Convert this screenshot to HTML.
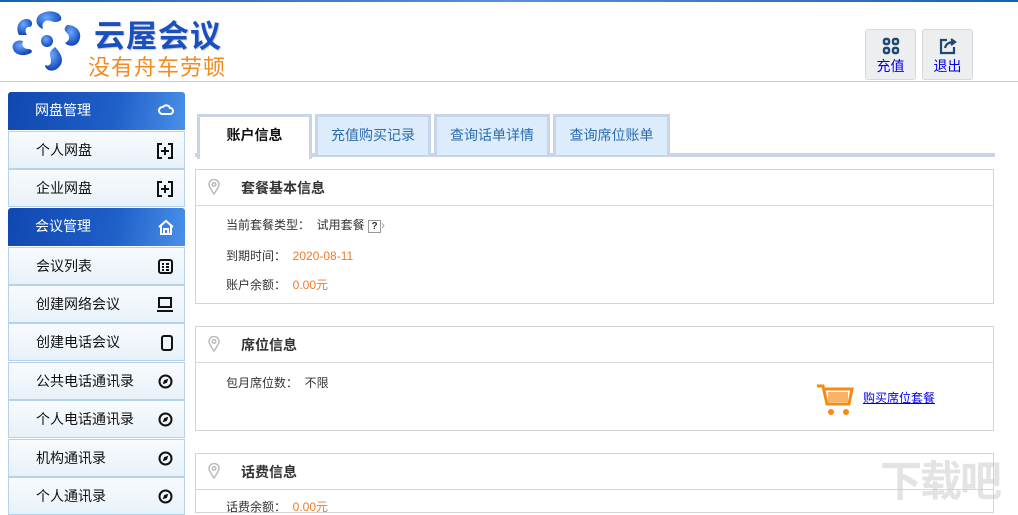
<!DOCTYPE html>
<html><head><meta charset="utf-8"><style>
*{margin:0;padding:0;box-sizing:border-box}
body{width:1018px;height:503px;overflow:hidden;background:#fff;font-family:"Liberation Sans","Noto Sans CJK SC",sans-serif;font-size:13px;color:#222;position:relative}
.abs{position:absolute}
.topline{left:0;top:0;width:1018px;height:2px;background:linear-gradient(90deg,#1a5fb0,#5b8fd0,#1a5fb0)}
.hdline{left:0;top:81px;width:1018px;height:1px;background:#ccc}
.btn{top:29px;width:51px;height:51px;background:#eceef0;border:1px solid #d6d8da;border-radius:3px;text-align:center;color:#0000ee;font-size:14px}
.btn svg{display:block;margin:7px auto 1px}
.side{left:8px;width:177px;height:38px;border:1px solid #b6d2ea;background:linear-gradient(#f8fbfe,#e8f1f9);font-size:14px;color:#111;padding-left:27px;line-height:36px}
.side.h{background:linear-gradient(100deg,#1048b0,#1f5fc8 60%,#4a90e8);color:#fff;border:none;border-radius:3px 3px 0 0}
.side svg{position:absolute;right:11px;top:11px}
.tab{top:114px;height:41px;background:#dcecfa;border:3px solid #c8d4ea;border-bottom:none;color:#2b6cb0;font-size:14px;text-align:center;line-height:37px}
.tab.a{background:#fff;color:#111;font-weight:bold;height:45px}
.panel{left:195px;width:799px;border:1px solid #d4d4d4;background:#fff}
.ph{height:36px;border-bottom:1px solid #d8d8d8;font-weight:bold;font-size:14px;line-height:36px;padding-left:45px;color:#333;position:relative}
.ph svg{position:absolute;left:12px;top:9px}
.row{font-size:12px;color:#333;padding-left:30px;position:absolute}
.or{color:#f07a28}
</style></head><body>
<div class="abs topline"></div>
<svg class="abs" style="left:9px;top:9px" width="76" height="66" viewBox="0 0 76 66">
<defs><radialGradient id="g" cx=".4" cy=".35" r=".7"><stop offset="0" stop-color="#6aa8ff"/><stop offset="1" stop-color="#0a3fb0"/></radialGradient></defs>
<path d="M30 6c8-6 20-4 22 2 2 5-6 6-10 4-6-2-10 2-8 8-6-2-9-9-4-14z" fill="url(#g)"/>
<path d="M58 16c10 0 16 8 12 16-3 6-10 6-14 2 4-2 6-6 2-10-2-2-4-4 0-8z" fill="url(#g)"/>
<path d="M46 38c6 6 10 14 4 20-5 6-14 4-14-2 2 1 6 1 6-4 0-6-4-8 4-14z" fill="url(#g)"/>
<path d="M22 44c-8 4-16 2-18-4-2-6 4-10 10-8-2 4 0 8 6 8 2 0 4 2 2 4z" fill="url(#g)"/>
<path d="M10 26c-4-8 0-16 8-16 5 0 7 6 3 8-4-1-6 4-3 8z" fill="url(#g)"/>
<circle cx="38" cy="32" r="6" fill="url(#g)"/>
</svg>
<div class="abs" style="left:94px;top:11px;font-size:31px;font-weight:bold;color:#1a4fc0;letter-spacing:1px;text-shadow:1px 1px 1px #ccc">云屋会议</div>
<div class="abs" style="left:88px;top:50px;font-size:22px;color:#f58a1e;letter-spacing:1px">没有舟车劳顿</div>
<div class="abs btn" style="left:865px"><svg width="18" height="18" viewBox="0 0 18 18" fill="none" stroke="#1f4a70" stroke-width="2.4"><rect x="2" y="2" width="5" height="5" rx="1.5"/><rect x="11" y="2" width="5" height="5" rx="1.5"/><rect x="2" y="11" width="5" height="5" rx="1.5"/><rect x="11" y="11" width="5" height="5" rx="1.5"/></svg>充值</div>
<div class="abs btn" style="left:922px"><svg width="18" height="18" viewBox="0 0 18 18" fill="none" stroke="#1f4a70" stroke-width="2.2"><path d="M8 3H2v13h13v-6"/><path d="M6 11c1-4 4-6 9-6" /><path d="M12 2l4 3-4 3" fill="#1f4a70"/></svg>退出</div>
<div class="abs hdline"></div>

<div class="abs side h" style="top:92px">网盘管理<svg width="16" height="12" viewBox="0 0 16 12" fill="none" stroke="#fff" stroke-width="2"><path d="M4 11h8a3 3 0 0 0 0-6 4 4 0 0 0-7-1 3.5 3.5 0 0 0-1 7z"/></svg></div>
<div class="abs side" style="top:131px">个人网盘<svg width="16" height="16" viewBox="0 0 16 16" fill="none" stroke="#111" stroke-width="2"><path d="M5 1H1v14h4M11 1h4v14h-4M8 4v8M4 8h8"/></svg></div>
<div class="abs side" style="top:169px">企业网盘<svg width="16" height="16" viewBox="0 0 16 16" fill="none" stroke="#111" stroke-width="2"><path d="M5 1H1v14h4M11 1h4v14h-4M8 4v8M4 8h8"/></svg></div>
<div class="abs side h" style="top:208px">会议管理<svg width="16" height="16" viewBox="0 0 16 16" fill="none" stroke="#fff" stroke-width="2"><path d="M1 8l7-6 7 6M3 7v8h10V7M6 15v-5h4v5"/></svg></div>
<div class="abs side" style="top:247px">会议列表<svg width="15" height="15" viewBox="0 0 15 15" fill="none" stroke="#111" stroke-width="2"><rect x="1" y="1" width="13" height="13" rx="2"/><path d="M4 5h2M8 5h3M4 8h2M8 8h3M4 11h2M8 11h3"/></svg></div>
<div class="abs side" style="top:285px">创建网络会议<svg width="16" height="15" viewBox="0 0 16 15" fill="none" stroke="#111" stroke-width="2"><rect x="2" y="1" width="12" height="9"/><path d="M0 14h16"/></svg></div>
<div class="abs side" style="top:323px">创建电话会议<svg width="12" height="16" viewBox="0 0 12 16" fill="none" stroke="#111" stroke-width="2"><rect x="1" y="1" width="10" height="14" rx="2"/></svg></div>
<div class="abs side" style="top:362px">公共电话通讯录<svg width="15" height="15" viewBox="0 0 15 15" fill="none" stroke="#111" stroke-width="2"><circle cx="7.5" cy="7.5" r="6"/><path d="M5.5 9.5l1-3 3-1-1 3z" fill="#111" stroke-width="1"/></svg></div>
<div class="abs side" style="top:400px">个人电话通讯录<svg width="15" height="15" viewBox="0 0 15 15" fill="none" stroke="#111" stroke-width="2"><circle cx="7.5" cy="7.5" r="6"/><path d="M5.5 9.5l1-3 3-1-1 3z" fill="#111" stroke-width="1"/></svg></div>
<div class="abs side" style="top:439px">机构通讯录<svg width="15" height="15" viewBox="0 0 15 15" fill="none" stroke="#111" stroke-width="2"><circle cx="7.5" cy="7.5" r="6"/><path d="M5.5 9.5l1-3 3-1-1 3z" fill="#111" stroke-width="1"/></svg></div>
<div class="abs side" style="top:477px">个人通讯录<svg width="15" height="15" viewBox="0 0 15 15" fill="none" stroke="#111" stroke-width="2"><circle cx="7.5" cy="7.5" r="6"/><path d="M5.5 9.5l1-3 3-1-1 3z" fill="#111" stroke-width="1"/></svg></div>

<div class="abs" style="left:195px;top:153px;width:800px;height:4px;background:#c8d4ea"></div>
<div class="abs tab a" style="left:197px;width:115px">账户信息</div>
<div class="abs tab" style="left:315px;width:116px">充值购买记录</div>
<div class="abs tab" style="left:434px;width:116px">查询话单详情</div>
<div class="abs tab" style="left:553px;width:117px">查询席位账单</div>

<div class="abs panel" style="top:169px;height:135px">
<div class="ph"><svg width="12" height="16" viewBox="0 0 12 16" fill="none" stroke="#bbb" stroke-width="1.5"><path d="M6 15C2 9 1 7 1 5.5a5 5 0 0 1 10 0C11 7 10 9 6 15z"/><circle cx="6" cy="5.5" r="1.8"/></svg>套餐基本信息</div>
<div class="row" style="top:46px">当前套餐类型：&nbsp; 试用套餐 <span style="display:inline-block;border:1px solid #999;font-size:10px;line-height:11px;width:13px;text-align:center;font-weight:bold">?</span><span style="color:#999">›</span></div>
<div class="row" style="top:77px">到期时间：&nbsp; <span class="or">2020-08-11</span></div>
<div class="row" style="top:106px">账户余额：&nbsp; <span class="or">0.00元</span></div>
</div>
<div class="abs panel" style="top:326px;height:105px">
<div class="ph"><svg width="12" height="16" viewBox="0 0 12 16" fill="none" stroke="#bbb" stroke-width="1.5"><path d="M6 15C2 9 1 7 1 5.5a5 5 0 0 1 10 0C11 7 10 9 6 15z"/><circle cx="6" cy="5.5" r="1.8"/></svg>席位信息</div>
<div class="row" style="top:47px">包月席位数：&nbsp; 不限</div>
<svg class="abs" style="left:620px;top:56px" width="38" height="34" viewBox="0 0 38 34"><path d="M1 3h6l4 18h22l3-15H9" fill="none" stroke="#f88a10" stroke-width="3"/><g fill="#f8a040"><rect x="12" y="9" width="20" height="10" opacity=".8"/></g><circle cx="15" cy="29" r="3" fill="#f88a10"/><circle cx="30" cy="29" r="3" fill="#f88a10"/></svg>
<div class="abs" style="left:667px;top:62px;font-size:12px;color:#0000ee;text-decoration:underline">购买席位套餐</div>
</div>
<div class="abs panel" style="top:453px;height:60px">
<div class="ph"><svg width="12" height="16" viewBox="0 0 12 16" fill="none" stroke="#bbb" stroke-width="1.5"><path d="M6 15C2 9 1 7 1 5.5a5 5 0 0 1 10 0C11 7 10 9 6 15z"/><circle cx="6" cy="5.5" r="1.8"/></svg>话费信息</div>
<div class="row" style="top:44px">话费余额：&nbsp; <span class="or">0.00元</span></div>
</div>
<div class="abs" style="left:880px;top:448px;font-size:42px;font-weight:bold;color:rgba(200,200,200,.5);letter-spacing:-2px">下载吧</div>
</body></html>
